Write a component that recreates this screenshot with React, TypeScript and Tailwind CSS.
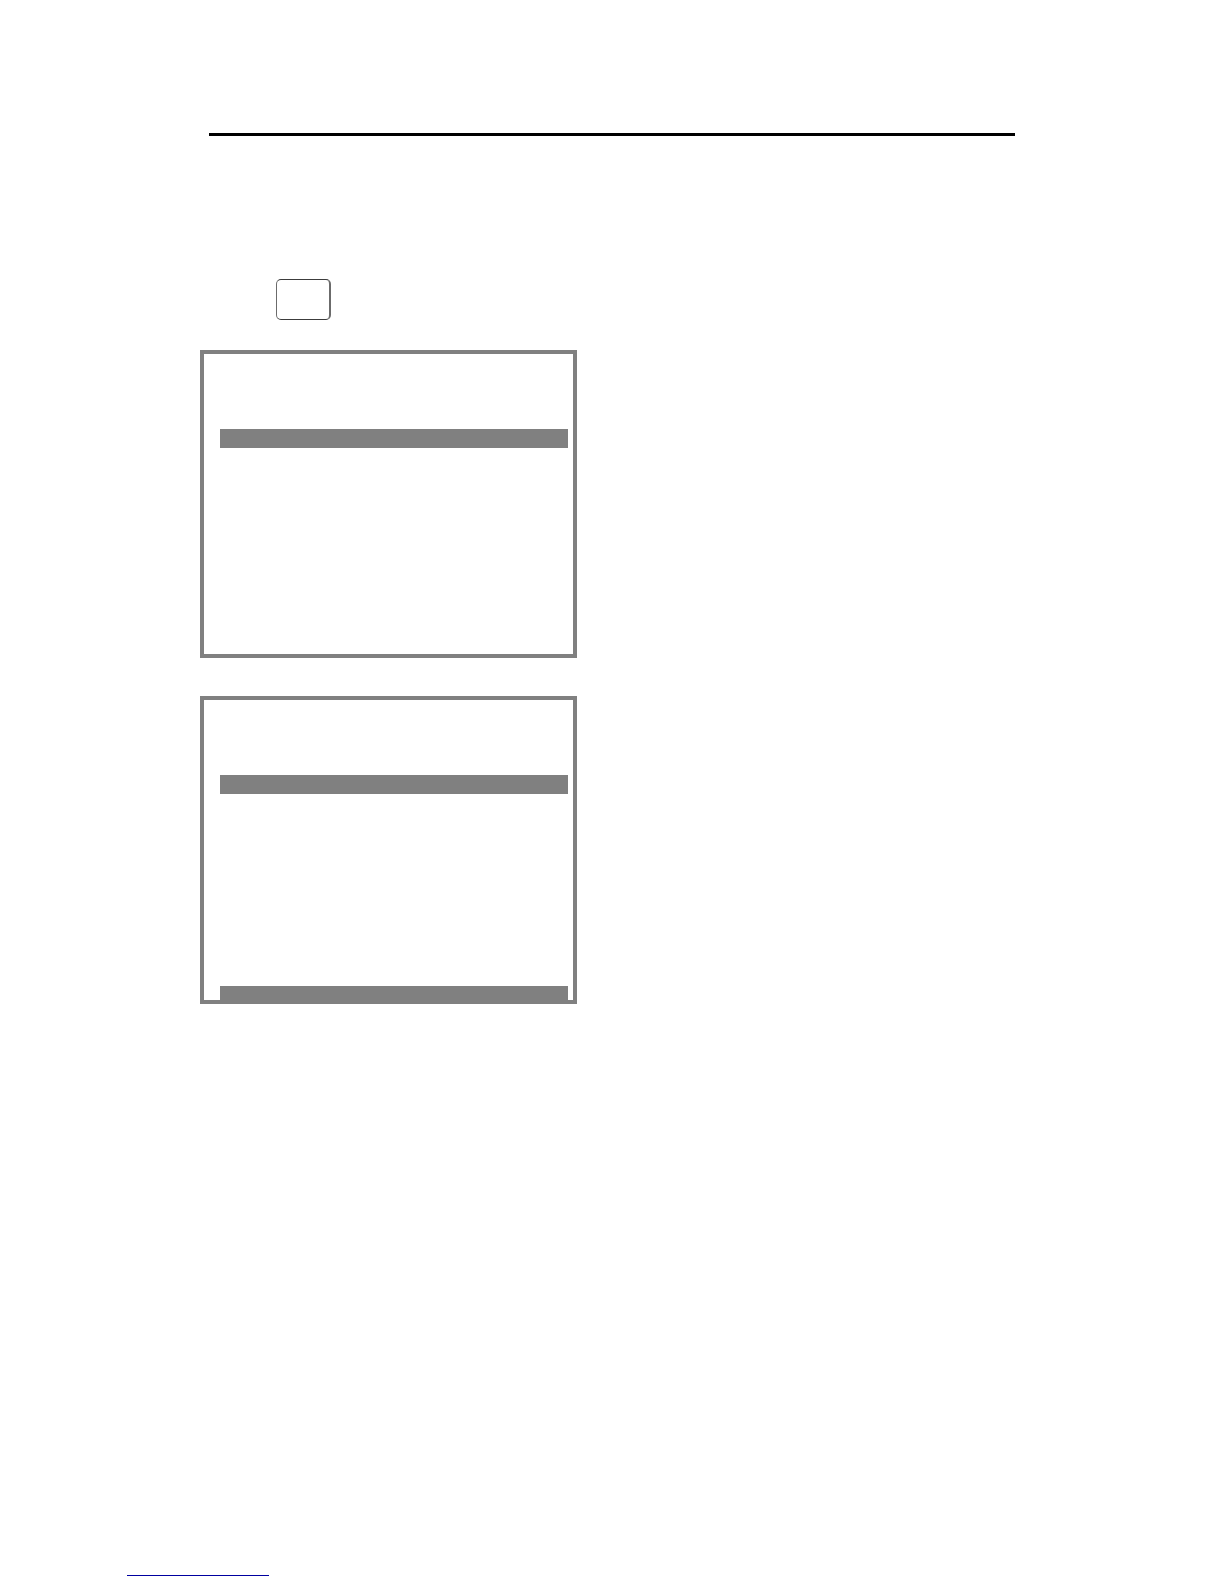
type ScreenPanelProps = {
  footerBar?: boolean;
};

// Empty display frame: title area, highlighted row, then blank rows
function ScreenPanel({ footerBar }: ScreenPanelProps) {
  return (
    <section className="flex h-[308px] w-full max-w-[377px] flex-col border-4 border-[#808080] pt-[75px] pr-[5px] pl-4">
      <div className="h-[19px] bg-[#808080]" />
      {footerBar && <div className="mt-auto h-[14px] bg-[#808080]" />}
    </section>
  );
}

export default function App() {
  return (
    <div className="flex min-h-screen flex-col bg-white pt-[133px] pb-2">
      <header className="px-[209px]">
        <hr className="border-t-3 border-black" />
      </header>

      <main className="flex flex-col px-[200px] pt-[143px]">
        {/* Blank keycap */}
        <kbd className="ml-[76px] block h-[41px] w-[55px] rounded-[5px] border border-r-2 border-[#3c3c3c] border-r-[#6b6b6b] border-l-[#6b6b6b]" />

        <div className="mt-[30px] flex flex-col gap-[38px]">
          <ScreenPanel />
          <ScreenPanel footerBar />
        </div>
      </main>

      <footer className="mt-auto pl-[127px]">
        <div className="h-px w-[142px] bg-[#0000a0]" />
      </footer>
    </div>
  );
}
